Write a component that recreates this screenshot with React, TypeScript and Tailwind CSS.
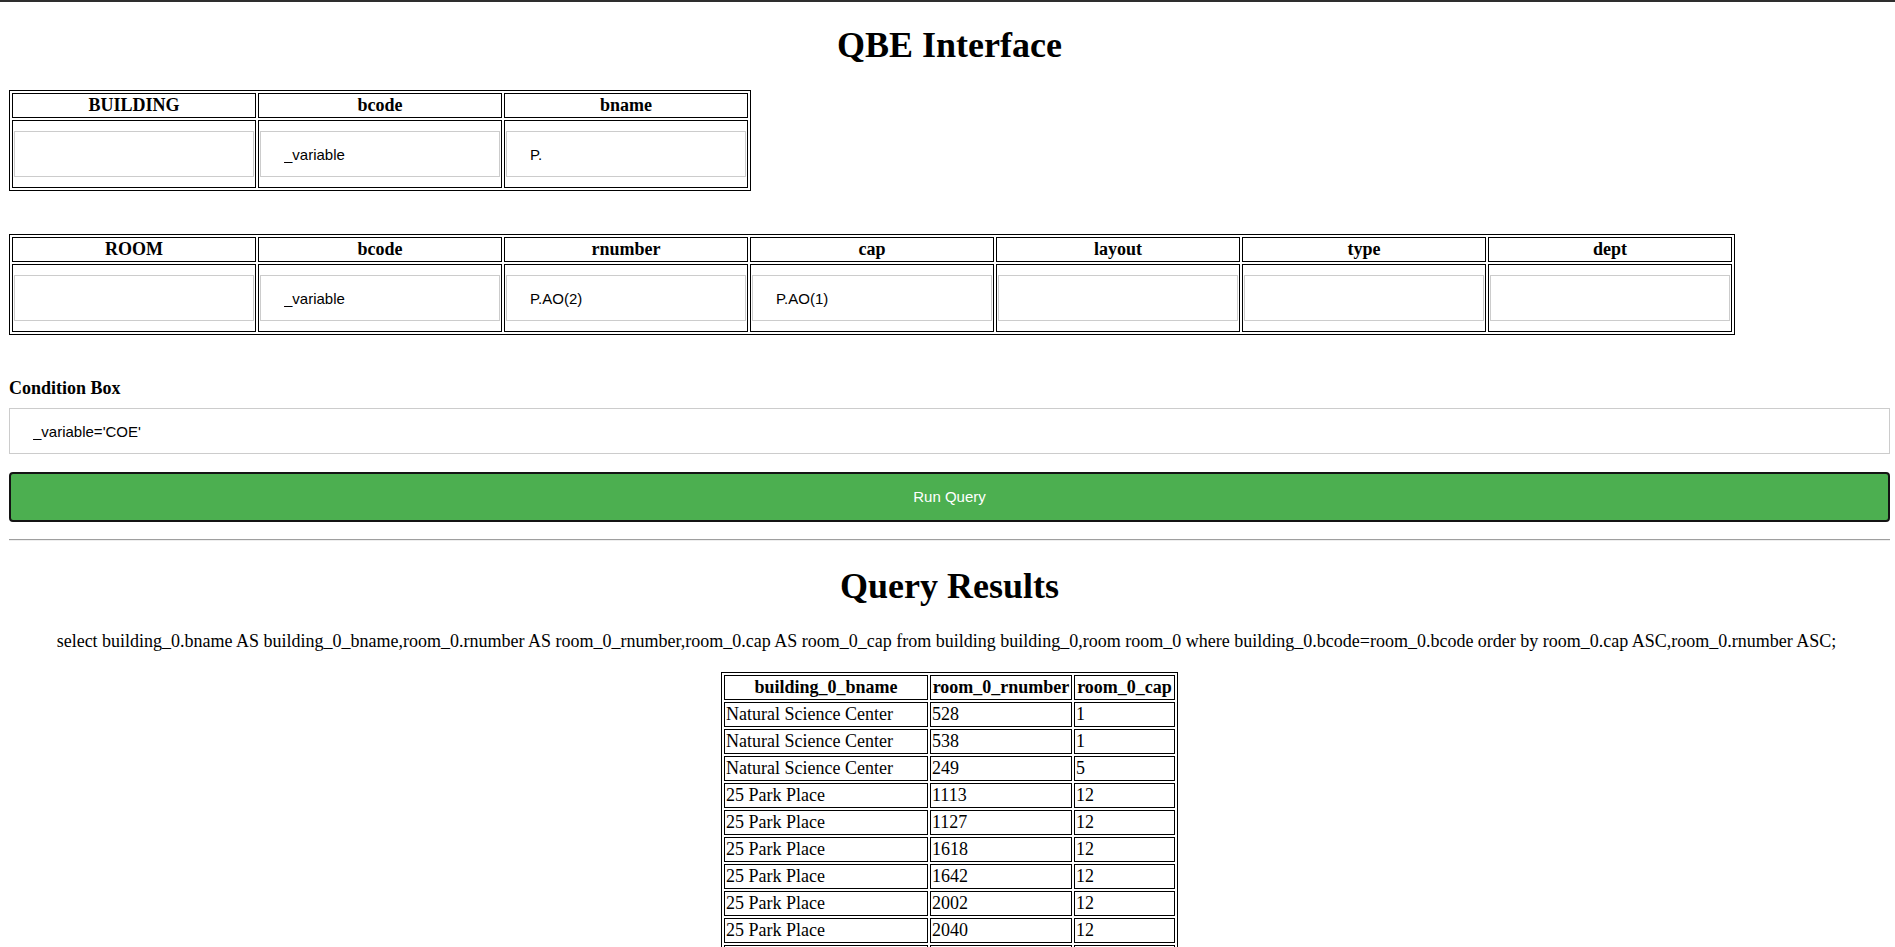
import React from "react";

const serif = "font-['Liberation_Serif','Times_New_Roman',serif]";
const sans = "font-['Liberation_Sans',Arial,sans-serif]";

function QbeInput({ value }: { value: string }) {
  return (
    <input
      type="text"
      readOnly
      value={value}
      className={`${sans} my-[9px] block w-[240px] h-[46px] border border-[#cccccc] bg-white pl-[23px] pr-[22px] text-[15px] text-black outline-none`}
    />
  );
}

function QbeTable({ columns, values }: { columns: string[]; values: string[] }) {
  return (
    <table className="border-separate border-spacing-[2px] border border-black">
      <thead>
        <tr>
          {columns.map((c) => (
            <th
              key={c}
              className="border border-black p-[1px] text-center text-[18px] leading-[21px] font-bold"
            >
              {c}
            </th>
          ))}
        </tr>
      </thead>
      <tbody>
        <tr>
          {values.map((v, i) => (
            <td key={i} className="border border-black p-[1px]">
              <QbeInput value={v} />
            </td>
          ))}
        </tr>
      </tbody>
    </table>
  );
}

const rows: [string, string, string][] = [
  ["Natural Science Center", "528", "1"],
  ["Natural Science Center", "538", "1"],
  ["Natural Science Center", "249", "5"],
  ["25 Park Place", "1113", "12"],
  ["25 Park Place", "1127", "12"],
  ["25 Park Place", "1618", "12"],
  ["25 Park Place", "1642", "12"],
  ["25 Park Place", "2002", "12"],
  ["25 Park Place", "2040", "12"],
  ["25 Park Place", "2112", "12"],
  ["25 Park Place", "2123", "12"],
  ["25 Park Place", "2131", "12"],
];

export default function App() {
  return (
    <div className={`${serif} min-h-screen bg-white text-black`}>
      <div className="h-[2px] w-full bg-[#2e2e2e]" />
      <div className="pl-[9px] pr-[5px] pb-[40px]">
        <h1 className="mt-[23px] mb-[24px] text-center text-[36px] leading-[41px] font-bold">
          QBE Interface
        </h1>

        <QbeTable columns={["BUILDING", "bcode", "bname"]} values={["", "_variable", "P."]} />

        <div className="mt-[43px]">
          <QbeTable
            columns={["ROOM", "bcode", "rnumber", "cap", "layout", "type", "dept"]}
            values={["", "_variable", "P.AO(2)", "P.AO(1)", "", "", ""]}
          />
        </div>

        <div className="mt-[43px] text-[18px] leading-[21px] font-bold">Condition Box</div>
        <input
          type="text"
          readOnly
          value="_variable='COE'"
          className={`${sans} mt-[9px] block w-full h-[46px] border border-[#cccccc] bg-white pl-[23px] pr-[22px] text-[15px] text-black outline-none`}
        />

        <button
          className={`${sans} mt-[18px] block w-full h-[50px] rounded-[4px] border-2 border-[#141414] bg-[#4caf50] text-[15px] text-white`}
        >
          Run Query
        </button>

        <div className="mt-[17px] border-t border-b border-t-[#9e9e9e] border-b-[#eeeeee]" />

        <h1 className="mt-[25px] text-center text-[36px] leading-[41px] font-bold">Query Results</h1>

        <p className="mt-[24px] pr-[6px] text-center text-[18px] leading-[21px]">
          select building_0.bname AS building_0_bname,room_0.rnumber AS room_0_rnumber,room_0.cap AS room_0_cap from building building_0,room room_0 where building_0.bcode=room_0.bcode order by room_0.cap ASC,room_0.rnumber ASC;
        </p>

        <table className="mx-auto mt-[20px] border-separate border-spacing-[2px] border border-black text-[18px] leading-[21px]">
          <thead>
            <tr>
              <th className="w-[204px] border border-black p-[1px] text-center font-bold">building_0_bname</th>
              <th className="w-[142px] border border-black p-[1px] text-center font-bold">room_0_rnumber</th>
              <th className="w-[101px] border border-black p-[1px] text-center font-bold">room_0_cap</th>
            </tr>
          </thead>
          <tbody>
            {rows.map((r, i) => (
              <tr key={i}>
                <td className="border border-black p-[1px] text-left">{r[0]}</td>
                <td className="border border-black p-[1px] text-left">{r[1]}</td>
                <td className="border border-black p-[1px] text-left">{r[2]}</td>
              </tr>
            ))}
          </tbody>
        </table>
      </div>
    </div>
  );
}
